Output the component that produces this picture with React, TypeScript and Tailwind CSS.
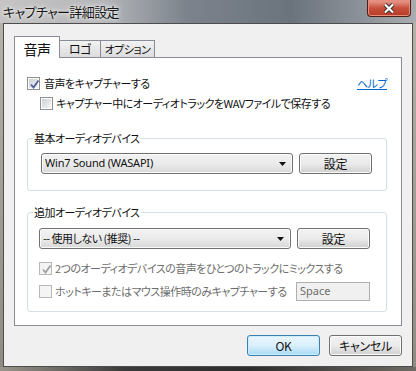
import React from "react";

const jp = "font-['Noto_Sans_CJK_JP','Noto_Sans',sans-serif] [font-feature-settings:'palt']";

function Check({ checked = false, disabled = false }: { checked?: boolean; disabled?: boolean }) {
  return (
    <span
      className={`relative flex h-[13px] w-[13px] shrink-0 items-center justify-center border ${
        disabled ? "border-[#b8b8b8] bg-[#f4f4f4]" : "border-[#8e8f8f] bg-white"
      }`}
    >
      <span
        className={`h-[9px] w-[9px] ${
          disabled ? "bg-[#f4f4f4]" : "bg-gradient-to-br from-[#cbcfd5] to-[#f6f6f6]"
        }`}
      />
      {checked && (
        <svg viewBox="0 0 11 11" className="absolute left-[1px] top-[1px] h-[11px] w-[11px]">
          <path
            d="M2 5.5 L4.5 8.5 L9.5 1.5"
            fill="none"
            stroke={disabled ? "#a0a0a0" : "#4a5f97"}
            strokeWidth="1.8"
          />
        </svg>
      )}
    </span>
  );
}

function Btn({ label, primary = false }: { label: string; primary?: boolean }) {
  return (
    <div
      className={`flex h-[21px] w-[73px] items-center justify-center rounded-[3px] border text-[12px] tracking-[-0.3px] text-[#111] ${
        primary
          ? "border-[#3c7fb1] bg-gradient-to-b from-[#eaf6fd] via-[#d9f0fc] to-[#a7d9f5] shadow-[inset_0_0_0_1px_#cfeefd]"
          : "border-[#707070] bg-gradient-to-b from-[#f2f2f2] via-[#ebebeb] to-[#cfcfcf] shadow-[inset_0_0_0_1px_#fbfbfb]"
      }`}
    >
      {label}
    </div>
  );
}

function Combo({ text, width }: { text: string; width: string }) {
  return (
    <div
      className={`flex h-[21px] ${width} items-center justify-between rounded-[3px] border border-[#707070] bg-gradient-to-b from-[#f2f2f2] via-[#ebebeb] to-[#d8d8d8] pl-[3px] pr-[6px] text-[11px] text-[#111] shadow-[inset_0_0_0_1px_#fbfbfb]`}
    >
      <span>{text}</span>
      <svg viewBox="0 0 7 4" className="h-[4px] w-[7px]">
        <path d="M0 0 H7 L3.5 4 Z" fill="#111" />
      </svg>
    </div>
  );
}

export default function App() {
  return (
    <div className={`flex h-[371px] w-[416px] flex-col overflow-hidden bg-gradient-to-b from-[#b9b4ab] to-[#8f8a82] ${jp}`}>
      <div className="flex h-[23px] shrink-0 bg-[linear-gradient(90deg,#c6c4c4_0%,#b4b6b9_25%,#7c838c_45%,#6b737d_70%,#8e949a_88%,#a9acb0_100%)]">
        <span className="pl-[3px] pt-[2px] text-[13px] leading-[19px] tracking-[-0.6px] text-[#151515] [text-shadow:0_0_6px_#f4f4f4,0_0_3px_#ffffff]">
          キャプチャー詳細設定
        </span>
        <div className="ml-auto mr-[5px] flex h-[17px] w-[44px] items-center justify-center rounded-b-[4px] border border-t-0 border-[#4a1f18] bg-gradient-to-b from-[#e6a195] via-[#c9503c] to-[#b33a24] shadow-[inset_0_0_0_1px_#e98c7c]">
          <svg viewBox="0 0 12 11" className="h-[11px] w-[12px]">
            <path d="M2 1.5 L10 9.5 M10 1.5 L2 9.5" stroke="#3a2a28" strokeWidth="4" />
            <path d="M2 1.5 L10 9.5 M10 1.5 L2 9.5" stroke="#ffffff" strokeWidth="2.2" />
          </svg>
        </div>
      </div>

      <div className="flex flex-1 px-[3px]">
        <div className="flex flex-1 flex-col border border-[#4d4d4d] bg-[#f0f0f0] pl-[10px] pt-[12px]">
          <div className="flex h-[21px] items-end text-[12px] tracking-[-0.5px] text-[#111]">
            <div className="relative z-10 -mb-px flex h-[22px] w-[46px] items-start justify-center border border-b-0 border-[#898c95] bg-white pt-[2px] text-[14px]">
              音声
            </div>
            <div className="flex h-[17px] w-[41px] items-center justify-center border border-b-0 border-l-0 border-[#898c95] bg-gradient-to-b from-[#f2f2f2] to-[#dcdcdc]">
              ロゴ
            </div>
            <div className="flex h-[17px] w-[54px] items-center justify-center border border-b-0 border-l-0 border-[#898c95] bg-gradient-to-b from-[#f2f2f2] to-[#dcdcdc] text-[11px]">
              オプション
            </div>
          </div>

          <div className="flex h-[269px] w-[388px] flex-col border border-[#898c95] bg-white pl-[12px] pt-[19px] text-[11px] tracking-[-0.5px] text-[#111]">
            <div className="flex h-[13px] items-center pr-[14px]">
              <Check checked />
              <span className="ml-[4px]">音声をキャプチャーする</span>
              <span className="ml-auto text-[#0066cc] underline">ヘルプ</span>
            </div>
            <div className="ml-[13px] mt-[7px] flex h-[13px] items-center">
              <Check />
              <span className="ml-[3px]">キャプチャー中にオーディオトラックをWAVファイルで保存する</span>
            </div>

            <fieldset className="mt-[20px] w-[360px] rounded-[3px] border border-[#d5dfe5] pb-[16px] pl-[13px] pt-[7px]">
              <legend className="-ml-[8px] px-[1px] leading-[16px]">基本オーディオデバイス</legend>
              <div className="flex items-center gap-[6px] tracking-normal">
                <div className="font-['Noto_Sans','Noto_Sans_CJK_JP',sans-serif] tracking-[-0.2px]">
                  <Combo text="Win7 Sound (WASAPI)" width="w-[252px]" />
                </div>
                <Btn label="設定" />
              </div>
            </fieldset>

            <fieldset className="mt-[13px] w-[360px] rounded-[3px] border border-[#d5dfe5] pb-[10px] pl-[11px] pt-[8px]">
              <legend className="-ml-[6px] px-[1px] leading-[16px]">追加オーディオデバイス</legend>
              <div className="flex w-[331px] flex-col">
                <div className="flex items-center gap-[6px]">
                  <Combo text="-- 使用しない (推奨) --" width="w-[252px]" />
                  <Btn label="設定" />
                </div>
                <div className="mt-[13px] flex h-[13px] items-center text-[#6d6d6d]">
                  <Check checked disabled />
                  <span className="ml-[3px]">2つのオーディオデバイスの音声をひとつのトラックにミックスする</span>
                </div>
                <div className="mt-[7px] flex h-[19px] items-center text-[#6d6d6d]">
                  <Check disabled />
                  <span className="ml-[3px]">ホットキーまたはマウス操作時のみキャプチャーする</span>
                  <div className="ml-auto flex h-[19px] w-[74px] items-center border border-[#afafaf] bg-[#f0f0f0] pl-[3px] font-['Noto_Sans',sans-serif] tracking-normal">
                    Space
                  </div>
                </div>
              </div>
            </fieldset>
          </div>

          <div className="mt-[9px] flex w-[388px] justify-end gap-[9px]">
            <Btn label="OK" primary />
            <Btn label="キャンセル" />
          </div>
        </div>
      </div>
      <div className="h-[4px] shrink-0 bg-[linear-gradient(90deg,#9a958c,#3a3a3a_30%,#2c2c2c_60%,#6f6b64)]" />
    </div>
  );
}
